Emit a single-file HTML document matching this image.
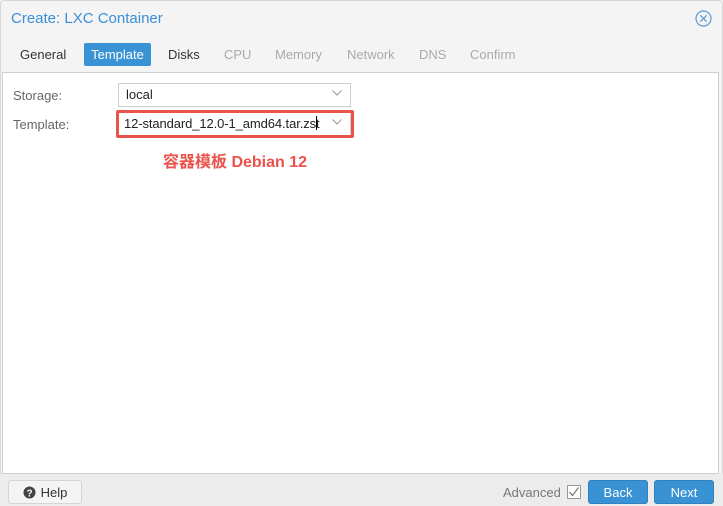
<!DOCTYPE html>
<html><head><meta charset="utf-8"><style>
*{box-sizing:border-box;margin:0;padding:0}
body{width:723px;height:506px;overflow:hidden;background:#f4f4f4;font-family:"Liberation Sans",sans-serif;font-size:13px;color:#333;position:relative}
.win{position:absolute;left:0;top:0;width:723px;height:506px;background:#f4f4f4;border:1px solid #d8d8d8;border-radius:4px}
.title{position:absolute;left:11px;top:10px;font-size:15px;color:#3a8fd6}
.close{position:absolute;left:695px;top:10px}
.tabs span{position:absolute;top:47px;font-size:13px}
.tabs .dis{color:#aaa}
.tab-act{position:absolute;left:84px;top:43px;width:67px;height:23px;background:#3892d4;border-radius:2px;color:#fff;font-size:13px;text-align:center;line-height:23px}
.body{position:absolute;left:2px;top:72px;width:717px;height:402px;background:#fff;border:1px solid #cfcfcf}
.lbl{position:absolute;left:13px;color:#666}
.field{position:absolute;left:118px;width:233px;height:24px;border:1px solid #cfcfcf;background:#fff;padding-left:7px;line-height:22px;color:#222;overflow:hidden;white-space:nowrap}
.chev{position:absolute;right:8px;top:6px}
.red{position:absolute;left:116px;top:110px;width:238px;height:28px;border:3px solid #e9534b;border-radius:2px}
.note{position:absolute;left:163px;top:148px;font-family:"Liberation Sans","Noto Sans CJK SC",sans-serif;font-weight:bold;font-size:16px;color:#e9534b;text-shadow:0 0 2px #fff,0 0 1px #fff}
.footer{position:absolute;left:0;top:474px;width:723px;height:32px;background:#ececec}
.btn{position:absolute;top:480px;height:24px;border-radius:3px;text-align:center;line-height:23px}
</style></head><body>
<div class="win"></div>
<div class="title">Create: LXC Container</div>
<svg class="close" width="17" height="17" viewBox="0 0 17 17"><circle cx="8.5" cy="8.5" r="7.5" fill="none" stroke="#5a9ad8" stroke-width="1.2"/><path d="M5.3 5.3L11.7 11.7M11.7 5.3L5.3 11.7" stroke="#5a9ad8" stroke-width="1.2"/></svg>
<div class="tabs">
<span style="left:20px">General</span>
<span style="left:168px">Disks</span>
<span class="dis" style="left:224px">CPU</span>
<span class="dis" style="left:275px">Memory</span>
<span class="dis" style="left:347px">Network</span>
<span class="dis" style="left:419px">DNS</span>
<span class="dis" style="left:470px">Confirm</span>
</div>
<div class="tab-act">Template</div>
<div class="body"></div>
<div class="lbl" style="top:88px">Storage:</div>
<div class="lbl" style="top:117px">Template:</div>
<div class="field" style="top:83px">local<svg class="chev" width="10" height="6" viewBox="0 0 10 6"><path d="M0.5 0.5L5 5L9.5 0.5" fill="none" stroke="#999"/></svg></div>
<div class="field" style="top:112px;padding-left:5px;letter-spacing:-0.1px">12-standard_12.0-1_amd64.tar.zst<span style="display:inline-block;width:1px;height:14px;background:#000;vertical-align:-2px;margin-left:-4px"></span><svg class="chev" width="10" height="6" viewBox="0 0 10 6"><path d="M0.5 0.5L5 5L9.5 0.5" fill="none" stroke="#999"/></svg></div>
<div class="red"></div>
<div class="note">容器模板 Debian 12</div>
<div class="footer"></div>
<div class="btn" style="left:8px;width:74px;background:#f4f4f4;border:1px solid #d5d5d5;color:#333"><svg width="13" height="13" viewBox="0 0 13 13" style="vertical-align:-2px;margin-right:5px"><circle cx="6.5" cy="6.5" r="6" fill="#444"/><text x="6.5" y="10.5" text-anchor="middle" font-size="10" font-weight="bold" fill="#fff" font-family="Liberation Sans">?</text></svg>Help</div>
<div style="position:absolute;left:503px;top:485px;color:#777">Advanced</div>
<svg style="position:absolute;left:567px;top:485px" width="14" height="14" viewBox="0 0 14 14"><rect x="0.5" y="0.5" width="13" height="13" fill="#fff" stroke="#999"/><path d="M2.5 7L5.5 10.5L11.5 2.5" fill="none" stroke="#777" stroke-width="1.2"/></svg>
<div class="btn" style="left:588px;width:60px;background:#3892d4;border:1px solid #2f80c0;color:#fff">Back</div>
<div class="btn" style="left:654px;width:60px;background:#3892d4;border:1px solid #2f80c0;color:#fff">Next</div>
</body></html>
